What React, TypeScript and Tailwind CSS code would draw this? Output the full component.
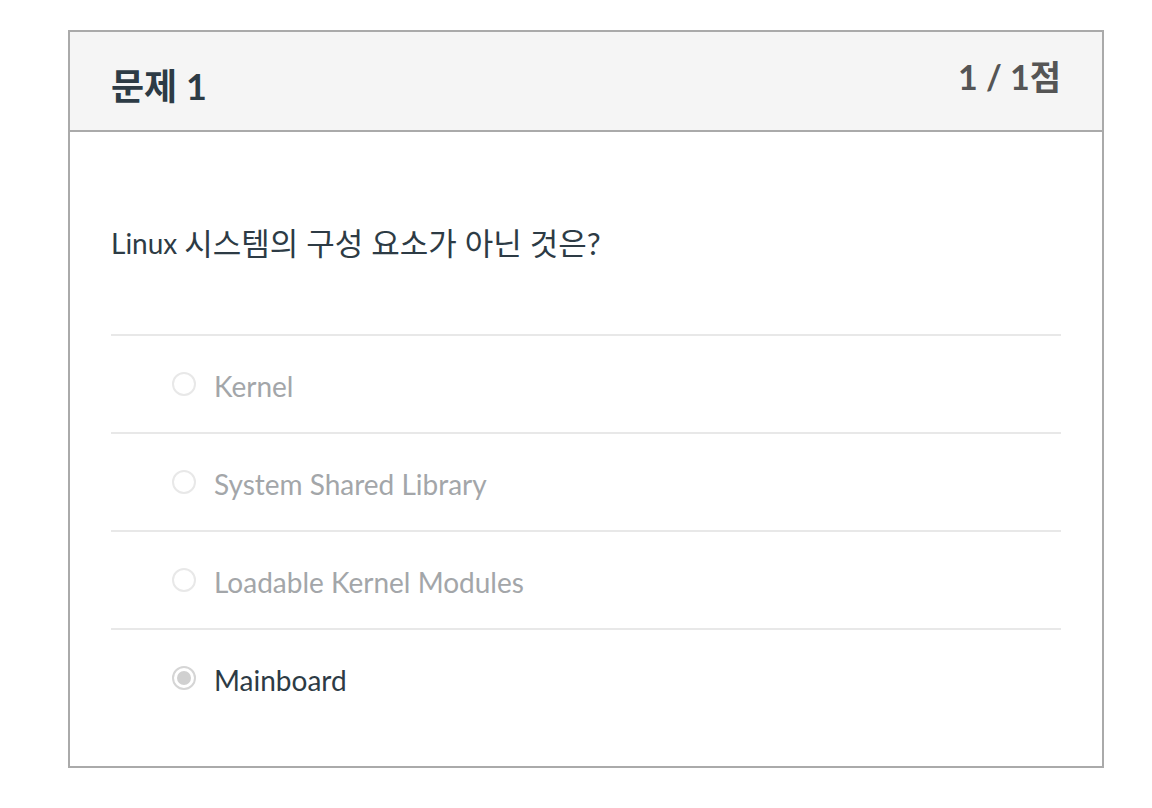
import React from "react";

const options = [
  { label: "Kernel", selected: false },
  { label: "System Shared Library", selected: false },
  { label: "Loadable Kernel Modules", selected: false },
  { label: "Mainboard", selected: true },
];

export default function App() {
  return (
    <div className="min-h-[808px] w-[1152px] bg-white pt-[30px] pl-[68px] font-['Lato','Noto_Sans_CJK_KR',sans-serif]">
      <div className="w-[1036px] border-2 border-[#aaaaaa] bg-white">
        <div className="flex h-[100px] items-start justify-between border-b-2 border-[#aaaaaa] bg-[#f5f5f5] px-[41px]">
          <h2 className="mt-[32px] text-[36px] font-bold leading-[44px] text-[#2d3b45]">문제 1</h2>
          <div className="mt-[25px] text-[34px] font-bold leading-[40px] text-[#555555]">1 / 1점</div>
        </div>
        <div className="px-[41px]">
          <div className="flex h-[202px] items-center pt-[20px] text-[28px] text-[#2d3b45]">
            <span>Linux</span>
            <span className="ml-[7px] text-[31px]">시스템의 구성 요소가 아닌 것은?</span>
          </div>
          <div>
            {options.map((o) => (
              <div
                key={o.label}
                className="flex h-[98px] items-center gap-[18px] border-t-2 border-[#e8e8e8] pl-[61px]"
              >
                {o.selected ? (
                  <span className="flex h-[24px] w-[24px] items-center justify-center rounded-full border-2 border-[#d5d5d5] bg-white">
                    <span className="h-[14px] w-[14px] rounded-full bg-[#d0d0d0]" />
                  </span>
                ) : (
                  <span className="h-[24px] w-[24px] rounded-full border-2 border-[#e8e8e8] bg-white" />
                )}
                <span className={`pt-[3px] text-[28px] ${o.selected ? "text-[#2d3b45]" : "text-[#a3a6a9]"}`}>{o.label}</span>
              </div>
            ))}
          </div>
          <div className="h-[40px]" />
        </div>
      </div>
    </div>
  );
}
